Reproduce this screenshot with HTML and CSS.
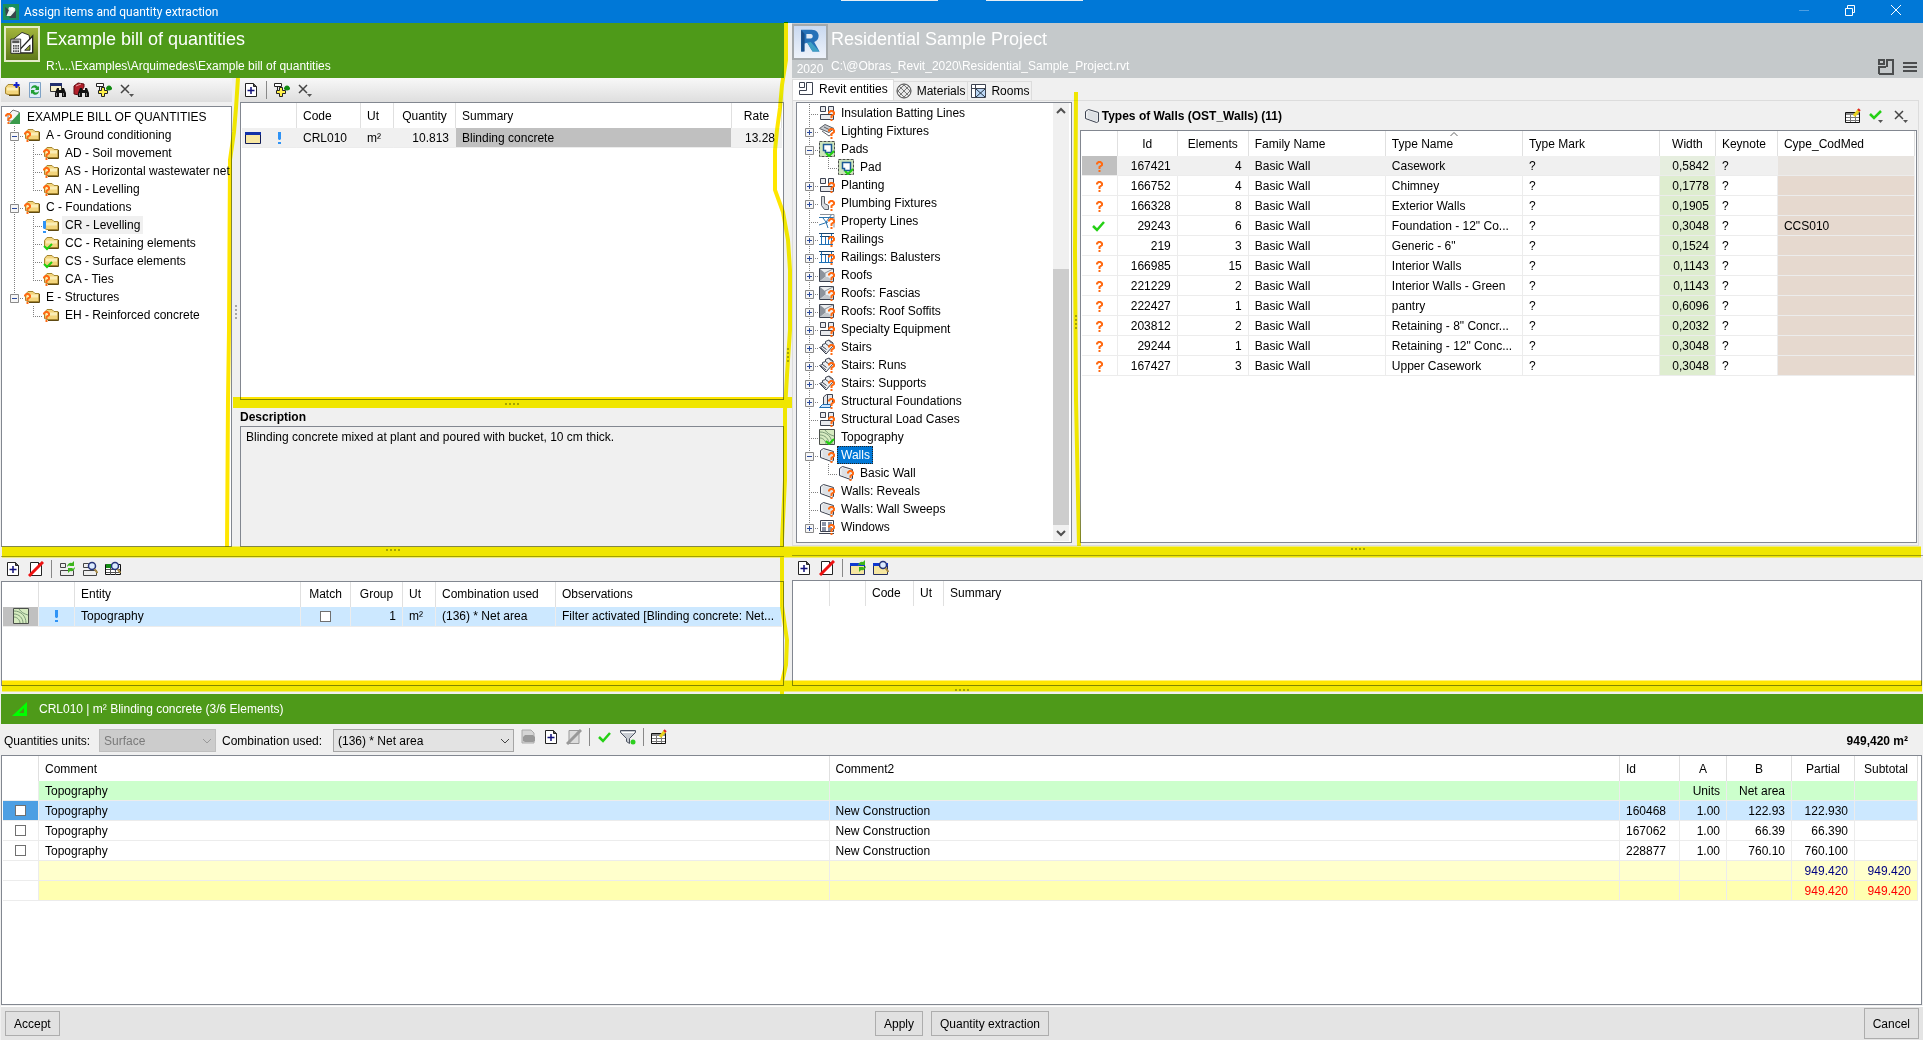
FILE: index.html
```html
<!DOCTYPE html>
<html lang="en">
<head>
	<meta charset="utf-8">
	<meta name="viewport" content="width=device-width, initial-scale=1.0">
	<title>Assign items and quantity extraction</title>
	<link rel="stylesheet" href="styles.css">
</head>
<body>
	<!-- icon sprite, every symbol is drawn on a 16px grid -->
	<svg class="sprite" width="0" height="0" aria-hidden="true">
		<defs>
			<g id="q"><path d="M1 3.500V2.500L2.500 1h2L6 2.500v1.500L3.500 6v2" fill="none" stroke="#ff6a13" stroke-width="2"/><path d="M2.500 9h2v2h-2z" fill="#ff6a13"/></g>
			<g id="tick"><path d="M1 3l3 3 5-5" fill="none" stroke="#1fcf0f" stroke-width="2"/></g>
			<g id="bang"><path d="M0 0h3v7l-1 1h-1l-1-1zM0 10h3v2H0z" fill="#2f93f5"/></g>
			<g id="folder"><path d="M1.500 11.500V5.500L4 2.500h5L11 4.500h4v8h-11z" fill="#f3d57c" stroke="#a5852f"/><path d="M3 5.500h11v3H3z" fill="#fbedb5"/><path d="M15.500 5v8.500H5" fill="none" stroke="#5f4a12"/></g>
			<g id="boxes"><path d="M1.500 1.500h5v5h-5zM9.500 1.500h5v8h-5zM1.500 9.500h13v5h-13z" fill="#e8eaee" stroke="#3c4250"/></g>
			<g id="wall"><path d="M1.500 3.500l3-2 10 3v9l-2 1-11-4z" fill="#f0f2f4" stroke="#3c4250"/><path d="M3.500 2.500l10 3v8l-10-3z" fill="#dde0e4"/></g>
			<g id="roof"><path d="M.5 1.500h14v13H.5z" fill="#eceef0" stroke="#3c4250"/><path d="M1 2l5 4v4l-5 4z" fill="#8d939c"/><path d="M1 14l5-4h3l5 4z" fill="#c3c7cc"/><path d="M14 2L6 6v4" fill="none" stroke="#8d939c"/></g>
			<g id="rail"><path d="M0 2.500h15M1 5.500h14" stroke="#17456e"/><path d="M2.500 3v11M6.500 6v8M9.500 6v8M12.500 3v11M0 13.500h14" stroke="#1d6fb5" fill="none"/></g>
			<g id="stair"><path d="M.5 8.500l3-1V5.500l3-1V2.500L10 1l4 3v3l-7 8z" fill="#eceef1" stroke="#3c4250"/><path d="M3.500 7.500l4 3M6.500 4.500l4 3M10 1.500l3 3M2 9l5 4" stroke="#3c4250" fill="none"/></g>
			<g id="topo"><path d="M.5.5h15v15H.5z" fill="#d6ebc0" stroke="#4a4f4a"/><path d="M1 6c5 0 9 4 9 9M1 3c7 0 12 5 12 12M1 9c3 0 6 3 6 6M6 1c2 3 5 5 9 6" fill="none" stroke="#7c9a78"/></g>
			<g id="pad"><path d="M.5.5h15v15H.5z" fill="#cfe6bd" stroke="#4a4f4a" stroke-dasharray="3 1"/><path d="M4.500 3.500h8v8h-6v-2h-2z" fill="#fff" stroke="#1c5a96" stroke-width="1.500"/></g>
			<g id="light"><path d="M.5 5.500L6 1.500l9 4-5 4z" fill="#c9ccd0" stroke="#5b6068"/><path d="M3 8l7 5 4-3M5 4l6 3" stroke="#5b6068" fill="none"/></g>
			<g id="plumb"><path d="M2.500 1.500h3v7l4 2v4h-4l-3-4z" fill="#d8dbdf" stroke="#5b6068"/></g>
			<g id="prop"><path d="M0 4.500h15M0 12l9-3M7 9l6-8M4 5l3 4 2 6" stroke="#2d74ad" fill="none"/><path d="M1 1.500h14v13" stroke="#8b9199" fill="none"/></g>
			<g id="found"><path d="M4.500 12V4l3-2.500h6V11" fill="#e6e8ec" stroke="#3c4250"/><path d="M8.500 2v9" stroke="#3c4250"/><path d="M.5 14.500l3-3h8v3z" fill="#cfe6ff" stroke="#1d6fb5"/></g>
			<g id="win"><path d="M1.500 1.500h13v11h-13zM0 14.500h15" fill="#fff" stroke="#3c4250"/><path d="M3 3h4v4H3zM9 3h4v4H9zM3 8h4v4H3zM9 8h4v4H9z" fill="#8b93a6"/></g>
			<g id="root"><path d="M3 6l5-5 6 2v9H3z" fill="#f4f4f4" stroke="#777"/><path d="M4 15L15 3v12z" fill="#3b9b4c"/></g>
			<g id="page"><path d="M2.500 1.500h8l3 3v10h-11z" fill="#fff" stroke="#222"/><path d="M10.500 1.500v3h3" fill="#555" stroke="#222"/></g>
			<g id="new"><use href="#page"/><path d="M8 5v7M4.500 8.500h7" stroke="#10107a" stroke-width="1.500"/></g>
			<g id="del"><use href="#page"/><path d="M1 15L15 1" stroke="#e11" stroke-width="3"/></g>
			<g id="bino"><path d="M7 6h2v2h3V6h2l2 5v4h-4v-4h-3v4H5v-4z" fill="#111"/><path d="M6 11h1v3H6zM13 11h1v3h-1z" fill="#777"/></g>
			<g id="findwin"><path d="M.5 1.500h11v8H.5z" fill="#f6f0c8" stroke="#333"/><path d="M0 1h12v3H0z" fill="#22306e"/><use href="#bino"/></g>
			<g id="findbook"><path d="M1 4l4-3 6 1v3l-5 8-5-1z" fill="#b3202a" stroke="#5f0d13"/><path d="M3 4l5-2" stroke="#e8a0a4"/><use href="#bino"/></g>
			<g id="assign"><path d="M.5 1.500h7v3h-7z" fill="#fff" stroke="#222"/><path d="M3.500 5v4" stroke="#222"/><path d="M5.500 5.500h3v3h3v3h-3v3h-3v-3h-3v-3h3z" fill="#fff04a" stroke="#222"/><path d="M10 6.500h6" stroke="#128a12" stroke-width="2"/><circle cx="13" cy="6" r="2.500" fill="#128a12"/></g>
			<g id="clear"><path d="M2 3l8 8M10 3l-8 8" stroke="#444" stroke-width="1.500"/><path d="M10 12h5l-2.500 3z" fill="#555"/></g>
			<g id="ok"><path d="M2 8l4 4 7-8" fill="none" stroke="#25d015" stroke-width="2.500"/></g>
			<g id="edit"><path d="M.5 4.500h14v10H.5z" fill="#fff" stroke="#111"/><path d="M1 5h13v2H1z" fill="#888"/><path d="M1 9.500h13M1 12.500h13M5.500 7v7M10.500 7v7" stroke="#777"/><path d="M9 8l5-6" stroke="#e8d21e" stroke-width="3"/><path d="M13 1l2 2" stroke="#d22" stroke-width="2"/></g>
			<g id="spin"><path d="M8 6a4 4 0 0 1 5-4l2-2v5h-5l1-1c-1 0-2 1-3 2zM16 6a4 4 0 0 1-5 4l-2 2V7h5l-1 1c1 0 2-1 3-2z" fill="#3db51c"/></g>
			<g id="lens"><circle cx="10" cy="5" r="3.500" fill="#dcebff" stroke="#26347a" stroke-width="1.500"/><path d="M12.500 8l3 4" stroke="#a78a45" stroke-width="2"/></g>
			<g id="greybox"><path d="M1.500 2.500h5v4h-5zM1.500 9.500h13v5h-13z" fill="#eee" stroke="#444"/></g>
			<g id="winbox"><path d="M.5 3.500h14v11H.5z" fill="#f5e6a0" stroke="#222c5e"/><path d="M0 3h15v3H0z" fill="#1039d0"/></g>
			<g id="plus"><path d="M.5.5h8v8h-8z" fill="#f6f6f6" stroke="#8a8a8a"/><path d="M2 4.500h5M4.500 2v5" stroke="#2b4a9c"/></g>
			<g id="minus"><path d="M.5.5h8v8h-8z" fill="#f6f6f6" stroke="#8a8a8a"/><path d="M2 4.500h5" stroke="#2b4a9c"/></g>
		</defs>
	</svg>

	<header class="titlebar">
		<div class="titlebar-name">
			<svg class="ico" viewBox="0 0 16 16"><path d="M0 0h16v16H0z" fill="#1b8f5c"/><path d="M3 12l3-9 6 1 1 8z" fill="#e8f1ec"/><path d="M2 3l4 3-3 7M6 14l7-8v8z" fill="#37464a"/><circle cx="9" cy="5" r="2" fill="#fff"/></svg>
			<h1>Assign items and quantity extraction</h1>
		</div>
		<div class="titlebar-tabs"><i></i><i></i></div>
		<div class="titlebar-controls">
			<button aria-label="Minimize"><svg viewBox="0 0 12 12"><path d="M1 6.500h10" stroke="#4d9fe3"/></svg></button>
			<button aria-label="Restore"><svg viewBox="0 0 12 12"><path d="M1.500 4.500h7v7h-7zM3.500 4V1.500h7v7H9" fill="none" stroke="#fff"/></svg></button>
			<button aria-label="Close"><svg viewBox="0 0 12 12"><path d="M1 1l10 10M11 1L1 11" stroke="#fff"/></svg></button>
		</div>
	</header>

	<main class="workspace">
		<section class="side">
			<div class="project bill">
				<div class="logo"><svg class="logo-bill" viewBox="0 0 36 36"><path d="M9 12l9-7 8 3 3 20H13z" fill="#fff" stroke="#222"/><path d="M12 28L30 9v19z" fill="#fff" stroke="#222" stroke-width="1.500"/><path d="M21 25l6-6v6z" fill="#8fa02c" stroke="#222"/><path d="M5.500 12.500h11v16h-11z" fill="#f4f4f4" stroke="#222"/><path d="M7 14h8v3H7z" fill="#555"/><path d="M8 20h7M8 23h7M8 26h7" stroke="#333" stroke-width="2" stroke-dasharray="1.500 1"/></svg></div>
				<div>
					<h2>Example bill of quantities</h2>
					<p>R:\...\Examples\Arquimedes\Example bill of quantities</p>
				</div>
			</div>

			<div class="upper">
				<div class="pane chapters">
					<div class="toolbar shaded">
						<button aria-label="New chapter"><svg class="ico" viewBox="0 0 16 16"><use href="#folder"/><path d="M12.500 0v6M9.500 3h6" stroke="#12c" stroke-width="2"/></svg></button>
						<button aria-label="Refresh"><svg class="ico" viewBox="0 0 16 16"><path d="M2.500.5h11v15h-11z" fill="#dcecfb" stroke="#7ea2c6"/><path d="M4 7c0-4 5-5 7-2l1-1v4H8l1-1c-1-2-3-2-5 0zM12 9c0 4-5 5-7 2l-1 1V8h4l-1 1c1 2 3 2 5 0z" fill="#1f9e35"/></svg></button>
						<button aria-label="Find item"><svg class="ico" viewBox="0 0 16 16"><use href="#findwin"/></svg></button>
						<button aria-label="Find in library"><svg class="ico" viewBox="0 0 16 16"><use href="#findbook"/></svg></button>
						<button aria-label="Assign"><svg class="ico" viewBox="0 0 16 16"><use href="#assign"/></svg></button>
						<button aria-label="Remove"><svg class="ico" viewBox="0 0 16 16"><use href="#clear"/></svg></button>
					</div>
					<ul class="box tree">
						<li><svg class="ico" viewBox="0 0 16 16"><use href="#root"/><use href="#q" y="4"/></svg><span>EXAMPLE BILL OF QUANTITIES</span></li>
						<li><button class="branch" aria-label="Collapse"><svg viewBox="0 0 9 9"><use href="#minus"/></svg></button><svg class="ico" viewBox="0 0 16 16"><use href="#folder"/><use href="#q" y="4"/></svg><span>A - Ground conditioning</span></li>
						<li><i class="line"></i><i class="branch"></i><svg class="ico" viewBox="0 0 16 16"><use href="#folder"/><use href="#q" y="4"/></svg><span>AD - Soil movement</span></li>
						<li><i class="line"></i><i class="branch"></i><svg class="ico" viewBox="0 0 16 16"><use href="#folder"/><use href="#q" y="4"/></svg><span>AS - Horizontal wastewater net</span></li>
						<li><i class="line"></i><i class="branch end"></i><svg class="ico" viewBox="0 0 16 16"><use href="#folder"/><use href="#q" y="4"/></svg><span>AN - Levelling</span></li>
						<li><button class="branch" aria-label="Collapse"><svg viewBox="0 0 9 9"><use href="#minus"/></svg></button><svg class="ico" viewBox="0 0 16 16"><use href="#folder"/><use href="#q" y="4"/></svg><span>C - Foundations</span></li>
						<li><i class="line"></i><i class="branch"></i><svg class="ico" viewBox="0 0 16 16"><use href="#folder"/><use href="#bang" y="4"/></svg><span class="current">CR - Levelling</span></li>
						<li><i class="line"></i><i class="branch"></i><svg class="ico" viewBox="0 0 16 16"><use href="#folder"/><use href="#tick" y="8"/></svg><span>CC - Retaining elements</span></li>
						<li><i class="line"></i><i class="branch"></i><svg class="ico" viewBox="0 0 16 16"><use href="#folder"/><use href="#tick" y="8"/></svg><span>CS - Surface elements</span></li>
						<li><i class="line"></i><i class="branch end"></i><svg class="ico" viewBox="0 0 16 16"><use href="#folder"/><use href="#q" y="4"/></svg><span>CA - Ties</span></li>
						<li><button class="branch end" aria-label="Collapse"><svg viewBox="0 0 9 9"><use href="#minus"/></svg></button><svg class="ico" viewBox="0 0 16 16"><use href="#folder"/><use href="#q" y="4"/></svg><span>E - Structures</span></li>
						<li><i class="line none"></i><i class="branch end"></i><svg class="ico" viewBox="0 0 16 16"><use href="#folder"/><use href="#q" y="4"/></svg><span>EH - Reinforced concrete</span></li>
					</ul>
				</div>
				<div class="splitter vertical"><i class="grip"></i></div>
				<div class="pane items">
					<div class="toolbar shaded">
						<button aria-label="New item"><svg class="ico" viewBox="0 0 16 16"><use href="#new"/></svg></button>
						<i class="sep"></i>
						<button aria-label="Assign"><svg class="ico" viewBox="0 0 16 16"><use href="#assign"/></svg></button>
						<button aria-label="Remove"><svg class="ico" viewBox="0 0 16 16"><use href="#clear"/></svg></button>
					</div>
					<div class="box grow-table">
						<table class="t-items">
							<colgroup><col class="w22"><col class="w33"><col class="w64"><col class="w33"><col class="w62"><col><col class="w50"></colgroup>
							<thead><tr><th class="plain"></th><th></th><th>Code</th><th>Ut</th><th class="mid">Quantity</th><th>Summary</th><th class="mid">Rate</th></tr></thead>
							<tbody>
								<tr class="grey"><td class="mark"><svg class="ico" viewBox="0 0 16 16"><path d="M.5 2.500h15v11H.5z" fill="#f8e7a2" stroke="#111c55"/><path d="M0 2h16v3H0z" fill="#1231a8"/></svg></td><td class="mark"><svg class="ico" viewBox="0 0 16 16"><use href="#bang" x="6" y="2"/></svg></td><td>CRL010</td><td>m²</td><td class="num">10.813</td><td class="focus">Blinding concrete</td><td class="num">13.28</td></tr>
							</tbody>
						</table>
					</div>
					<div class="splitter thin"><i class="grip"></i></div>
					<label class="caption" for="description">Description</label>
					<textarea class="box description" id="description" readonly>Blinding concrete mixed at plant and poured with bucket, 10 cm thick.</textarea>
				</div>
			</div>

			<div class="splitter ruled"><i class="grip"></i></div>

			<div class="toolbar">
				<button aria-label="New assignment"><svg class="ico" viewBox="0 0 16 16"><use href="#new"/></svg></button>
				<button aria-label="Delete assignment"><svg class="ico" viewBox="0 0 16 16"><use href="#del"/></svg></button>
				<i class="sep"></i>
				<button aria-label="Update entity"><svg class="ico" viewBox="0 0 16 16"><use href="#greybox"/><use href="#spin"/></svg></button>
				<button aria-label="Show entity"><svg class="ico" viewBox="0 0 16 16"><use href="#greybox"/><use href="#lens"/></svg></button>
				<button aria-label="Show quantities"><svg class="ico" viewBox="0 0 16 16"><path d="M.5 3.500h15v10H.5z" fill="#fff" stroke="#111"/><path d="M1 3h5v4H1z" fill="#118a11"/><path d="M1 8.500h14M1 11.500h14M5.500 7v7M10.500 7v7" stroke="#555"/><use href="#lens"/></svg></button>
			</div>
			<div class="box lower">
				<table class="t-entities">
					<colgroup><col class="w36"><col class="w36"><col><col class="w50"><col class="w52"><col class="w33"><col class="w120"><col></colgroup>
					<thead><tr><th></th><th></th><th>Entity</th><th class="mid">Match</th><th class="mid">Group</th><th>Ut</th><th>Combination used</th><th>Observations</th></tr></thead>
					<tbody>
						<tr class="picked"><td class="mark focus"><svg class="ico" viewBox="0 0 16 16"><use href="#topo"/></svg></td><td class="mark"><svg class="ico" viewBox="0 0 16 16"><use href="#bang" x="6" y="2"/></svg></td><td>Topography</td><td class="mark"><input type="checkbox" aria-label="Match"></td><td class="num">1</td><td>m²</td><td>(136) * Net area</td><td>Filter activated [Blinding concrete: Net...</td></tr>
					</tbody>
				</table>
			</div>
		</section>

		<div class="splitter vertical"><i class="grip"></i></div>

		<section class="side">
			<div class="project revit">
				<div class="logo-year">
					<div class="logo"><svg class="logo-revit" viewBox="0 0 32 32"><path d="M7 3h12c6 0 8 4 8 7 0 4-2 6-5 7l6 11h-8l-6-10-4 1v9H7z" fill="#2671b8"/><path d="M13 8h5c3 0 3 5 0 5h-5z" fill="#dfe9f6"/><path d="M14 18l4-1 10 11h-8z" fill="#3fa0c4"/><path d="M7 3l4 5v20H7z" fill="#174f8c"/></svg></div>
					<span>2020</span>
				</div>
				<div>
					<h2>Residential Sample Project</h2>
					<p>C:\@Obras_Revit_2020\Residential_Sample_Project.rvt</p>
				</div>
				<div class="project-tools">
					<button aria-label="Layout"><svg class="ico" viewBox="0 0 16 16"><path d="M1 1h5v4H1zM1 15V8h7M9 8V1h6v14H1" fill="none" stroke="#4b4d4e" stroke-width="2"/></svg></button>
					<button aria-label="Menu"><svg class="ico" viewBox="0 0 16 16"><path d="M1 4h14M1 8h14M1 12h14" stroke="#4b4d4e" stroke-width="2"/></svg></button>
				</div>
			</div>

			<nav class="tabs">
				<button class="active"><svg class="ico" viewBox="0 0 16 16"><path d="M1.500 1.500h5v5h-5zM8.500 1.500h6v12h-13v-4h7z" fill="#fff" stroke="#3c4250"/></svg>Revit entities</button>
				<button><svg class="ico" viewBox="0 0 16 16"><circle cx="8" cy="8" r="7" fill="#e8e8e8" stroke="#444"/><path d="M3 3l10 10M1 7l8 8M7 1l8 8M13 3L3 13M9 1L1 9M15 7l-8 8" stroke="#777"/></svg>Materials</button>
				<button><svg class="ico" viewBox="0 0 16 16"><path d="M1.500 1.500h14v13h-14zM5.500 1.500v13M1.500 5.500h14" fill="#fff" stroke="#3c4250"/><path d="M6 6h9v8H6z" fill="#bcd7f5"/><path d="M6 6l9 8M15 6l-9 8" stroke="#234"/></svg>Rooms</button>
			</nav>
			<div class="tab-panel">
				<div class="box entities">
					<ul class="tree">
						<li><i class="branch"></i><svg class="ico" viewBox="0 0 16 16"><use href="#boxes"/><use href="#q" x="9" y="5"/></svg><span>Insulation Batting Lines</span></li>
						<li><button class="branch" aria-label="Expand"><svg viewBox="0 0 9 9"><use href="#plus"/></svg></button><svg class="ico" viewBox="0 0 16 16"><use href="#light"/><use href="#q" x="9" y="5"/></svg><span>Lighting Fixtures</span></li>
						<li><button class="branch" aria-label="Collapse"><svg viewBox="0 0 9 9"><use href="#minus"/></svg></button><svg class="ico" viewBox="0 0 16 16"><use href="#pad"/><use href="#tick" x="6" y="9"/></svg><span>Pads</span></li>
						<li><i class="line"></i><i class="branch end"></i><svg class="ico" viewBox="0 0 16 16"><use href="#pad"/><use href="#tick" x="6" y="9"/></svg><span>Pad</span></li>
						<li><button class="branch" aria-label="Expand"><svg viewBox="0 0 9 9"><use href="#plus"/></svg></button><svg class="ico" viewBox="0 0 16 16"><use href="#boxes"/><use href="#q" x="9" y="5"/></svg><span>Planting</span></li>
						<li><button class="branch" aria-label="Expand"><svg viewBox="0 0 9 9"><use href="#plus"/></svg></button><svg class="ico" viewBox="0 0 16 16"><use href="#plumb"/><use href="#q" x="9" y="5"/></svg><span>Plumbing Fixtures</span></li>
						<li><i class="branch"></i><svg class="ico" viewBox="0 0 16 16"><use href="#prop"/><use href="#q" x="9" y="5"/></svg><span>Property Lines</span></li>
						<li><button class="branch" aria-label="Expand"><svg viewBox="0 0 9 9"><use href="#plus"/></svg></button><svg class="ico" viewBox="0 0 16 16"><use href="#rail"/><use href="#q" x="9" y="5"/></svg><span>Railings</span></li>
						<li><button class="branch" aria-label="Expand"><svg viewBox="0 0 9 9"><use href="#plus"/></svg></button><svg class="ico" viewBox="0 0 16 16"><use href="#rail"/><use href="#q" x="9" y="5"/></svg><span>Railings: Balusters</span></li>
						<li><button class="branch" aria-label="Expand"><svg viewBox="0 0 9 9"><use href="#plus"/></svg></button><svg class="ico" viewBox="0 0 16 16"><use href="#roof"/><use href="#q" x="9" y="5"/></svg><span>Roofs</span></li>
						<li><button class="branch" aria-label="Expand"><svg viewBox="0 0 9 9"><use href="#plus"/></svg></button><svg class="ico" viewBox="0 0 16 16"><use href="#roof"/><use href="#q" x="9" y="5"/></svg><span>Roofs: Fascias</span></li>
						<li><button class="branch" aria-label="Expand"><svg viewBox="0 0 9 9"><use href="#plus"/></svg></button><svg class="ico" viewBox="0 0 16 16"><use href="#roof"/><use href="#q" x="9" y="5"/></svg><span>Roofs: Roof Soffits</span></li>
						<li><button class="branch" aria-label="Expand"><svg viewBox="0 0 9 9"><use href="#plus"/></svg></button><svg class="ico" viewBox="0 0 16 16"><use href="#boxes"/><use href="#q" x="9" y="5"/></svg><span>Specialty Equipment</span></li>
						<li><button class="branch" aria-label="Expand"><svg viewBox="0 0 9 9"><use href="#plus"/></svg></button><svg class="ico" viewBox="0 0 16 16"><use href="#stair"/><use href="#q" x="9" y="5"/></svg><span>Stairs</span></li>
						<li><button class="branch" aria-label="Expand"><svg viewBox="0 0 9 9"><use href="#plus"/></svg></button><svg class="ico" viewBox="0 0 16 16"><use href="#stair"/><use href="#q" x="9" y="5"/></svg><span>Stairs: Runs</span></li>
						<li><button class="branch" aria-label="Expand"><svg viewBox="0 0 9 9"><use href="#plus"/></svg></button><svg class="ico" viewBox="0 0 16 16"><use href="#stair"/><use href="#q" x="9" y="5"/></svg><span>Stairs: Supports</span></li>
						<li><button class="branch" aria-label="Expand"><svg viewBox="0 0 9 9"><use href="#plus"/></svg></button><svg class="ico" viewBox="0 0 16 16"><use href="#found"/><use href="#q" x="9" y="5"/></svg><span>Structural Foundations</span></li>
						<li><i class="branch"></i><svg class="ico" viewBox="0 0 16 16"><use href="#boxes"/><use href="#q" x="9" y="5"/></svg><span>Structural Load Cases</span></li>
						<li><i class="branch"></i><svg class="ico" viewBox="0 0 16 16"><use href="#topo"/><use href="#tick" x="6" y="9"/></svg><span>Topography</span></li>
						<li><button class="branch" aria-label="Collapse"><svg viewBox="0 0 9 9"><use href="#minus"/></svg></button><svg class="ico" viewBox="0 0 16 16"><use href="#wall"/><use href="#q" x="9" y="5"/></svg><span class="selected">Walls</span></li>
						<li><i class="line"></i><i class="branch end"></i><svg class="ico" viewBox="0 0 16 16"><use href="#wall"/><use href="#q" x="9" y="5"/></svg><span>Basic Wall</span></li>
						<li><i class="branch"></i><svg class="ico" viewBox="0 0 16 16"><use href="#wall"/><use href="#q" x="9" y="5"/></svg><span>Walls: Reveals</span></li>
						<li><i class="branch"></i><svg class="ico" viewBox="0 0 16 16"><use href="#wall"/><use href="#q" x="9" y="5"/></svg><span>Walls: Wall Sweeps</span></li>
						<li><button class="branch end" aria-label="Expand"><svg viewBox="0 0 9 9"><use href="#plus"/></svg></button><svg class="ico" viewBox="0 0 16 16"><use href="#win"/><use href="#q" x="9" y="5"/></svg><span>Windows</span></li>
					</ul>
					<div class="scrollbar">
						<svg viewBox="0 0 16 16"><path d="M4 10l4-4 4 4" fill="none" stroke="#505050" stroke-width="2"/></svg>
						<div class="track"><i></i></div>
						<svg viewBox="0 0 16 16"><path d="M4 6l4 4 4-4" fill="none" stroke="#505050" stroke-width="2"/></svg>
					</div>
				</div>
				<div class="splitter vertical"><i class="grip"></i></div>
				<div class="pane types">
					<div class="types-head">
						<svg class="ico" viewBox="0 0 16 16"><use href="#wall"/></svg>
						<h3>Types of Walls (OST_Walls) (11)</h3>
						<button aria-label="Edit columns"><svg class="ico" viewBox="0 0 16 16"><use href="#edit"/></svg></button>
						<button aria-label="Accept"><svg class="ico" viewBox="0 0 16 16"><path d="M1 6l4 4 7-7" fill="none" stroke="#25d015" stroke-width="2.500"/><path d="M9 12h5l-2.500 3z" fill="#555"/></svg></button>
						<button aria-label="Remove"><svg class="ico" viewBox="0 0 16 16"><use href="#clear"/></svg></button>
					</div>
					<div class="box fill">
						<table class="t-walls">
							<colgroup><col class="w36"><col class="w60"><col class="w71"><col><col><col><col class="w56"><col class="w62"><col></colgroup>
							<thead><tr><th></th><th class="mid">Id</th><th class="mid">Elements</th><th>Family Name</th><th class="sorted">Type Name<svg viewBox="0 0 8 4"><path d="M.5 4L4 .5 7.500 4" fill="none" stroke="#666"/></svg></th><th>Type Mark</th><th class="mid">Width</th><th>Keynote</th><th>Cype_CodMed</th></tr></thead>
							<tbody>
								<tr class="grey"><td class="mark focus"><svg class="ico" viewBox="0 0 16 16"><use href="#q" x="5" y="3"/></svg></td><td class="num">167421</td><td class="num">4</td><td>Basic Wall</td><td>Casework</td><td>?</td><td class="num width">0,5842</td><td>?</td><td class="code"></td></tr>
								<tr><td class="mark"><svg class="ico" viewBox="0 0 16 16"><use href="#q" x="5" y="3"/></svg></td><td class="num">166752</td><td class="num">4</td><td>Basic Wall</td><td>Chimney</td><td>?</td><td class="num width">0,1778</td><td>?</td><td class="code"></td></tr>
								<tr><td class="mark"><svg class="ico" viewBox="0 0 16 16"><use href="#q" x="5" y="3"/></svg></td><td class="num">166328</td><td class="num">8</td><td>Basic Wall</td><td>Exterior Walls</td><td>?</td><td class="num width">0,1905</td><td>?</td><td class="code"></td></tr>
								<tr><td class="mark"><svg class="ico" viewBox="0 0 16 16"><use href="#ok"/></svg></td><td class="num">29243</td><td class="num">6</td><td>Basic Wall</td><td>Foundation - 12" Co...</td><td>?</td><td class="num width">0,3048</td><td>?</td><td class="code">CCS010</td></tr>
								<tr><td class="mark"><svg class="ico" viewBox="0 0 16 16"><use href="#q" x="5" y="3"/></svg></td><td class="num">219</td><td class="num">3</td><td>Basic Wall</td><td>Generic - 6"</td><td>?</td><td class="num width">0,1524</td><td>?</td><td class="code"></td></tr>
								<tr><td class="mark"><svg class="ico" viewBox="0 0 16 16"><use href="#q" x="5" y="3"/></svg></td><td class="num">166985</td><td class="num">15</td><td>Basic Wall</td><td>Interior Walls</td><td>?</td><td class="num width">0,1143</td><td>?</td><td class="code"></td></tr>
								<tr><td class="mark"><svg class="ico" viewBox="0 0 16 16"><use href="#q" x="5" y="3"/></svg></td><td class="num">221229</td><td class="num">2</td><td>Basic Wall</td><td>Interior Walls - Green</td><td>?</td><td class="num width">0,1143</td><td>?</td><td class="code"></td></tr>
								<tr><td class="mark"><svg class="ico" viewBox="0 0 16 16"><use href="#q" x="5" y="3"/></svg></td><td class="num">222427</td><td class="num">1</td><td>Basic Wall</td><td>pantry</td><td>?</td><td class="num width">0,6096</td><td>?</td><td class="code"></td></tr>
								<tr><td class="mark"><svg class="ico" viewBox="0 0 16 16"><use href="#q" x="5" y="3"/></svg></td><td class="num">203812</td><td class="num">2</td><td>Basic Wall</td><td>Retaining - 8" Concr...</td><td>?</td><td class="num width">0,2032</td><td>?</td><td class="code"></td></tr>
								<tr><td class="mark"><svg class="ico" viewBox="0 0 16 16"><use href="#q" x="5" y="3"/></svg></td><td class="num">29244</td><td class="num">1</td><td>Basic Wall</td><td>Retaining - 12" Conc...</td><td>?</td><td class="num width">0,3048</td><td>?</td><td class="code"></td></tr>
								<tr><td class="mark"><svg class="ico" viewBox="0 0 16 16"><use href="#q" x="5" y="3"/></svg></td><td class="num">167427</td><td class="num">3</td><td>Basic Wall</td><td>Upper Casework</td><td>?</td><td class="num width">0,3048</td><td>?</td><td class="code"></td></tr>
							</tbody>
						</table>
					</div>
				</div>
			</div>

			<div class="splitter ruled"><i class="grip"></i></div>

			<div class="toolbar">
				<button aria-label="New assignment"><svg class="ico" viewBox="0 0 16 16"><use href="#new"/></svg></button>
				<button aria-label="Delete assignment"><svg class="ico" viewBox="0 0 16 16"><use href="#del"/></svg></button>
				<i class="sep"></i>
				<button aria-label="Update item"><svg class="ico" viewBox="0 0 16 16"><use href="#winbox"/><use href="#spin"/></svg></button>
				<button aria-label="Show item"><svg class="ico" viewBox="0 0 16 16"><use href="#winbox"/><use href="#lens"/></svg></button>
			</div>
			<div class="box lower">
				<table class="t-assigned">
					<colgroup><col class="w36"><col class="w36"><col class="w48"><col class="w30"><col></colgroup>
					<thead><tr><th></th><th></th><th>Code</th><th>Ut</th><th class="plain">Summary</th></tr></thead>
				</table>
			</div>
		</section>
	</main>

	<section class="details">
		<div class="splitter thin"><i class="grip"></i></div>
		<div class="details-title">
			<svg class="ico" viewBox="0 0 16 16"><path d="M0 15L15 1v14zM7 12h5V7z" fill="#0f0" fill-rule="evenodd"/></svg>
			<h2>CRL010 | m² Blinding concrete (3/6 Elements)</h2>
		</div>
		<div class="options">
			<label class="units-label" for="units">Quantities units:</label>
			<div class="select off"><select id="units" disabled><option>Surface</option></select><svg viewBox="0 0 10 6"><path d="M1 1l4 4 4-4" fill="none" stroke="#999"/></svg></div>
			<label class="combination-label" for="combination">Combination used:</label>
			<div class="select wide"><select id="combination"><option>(136) * Net area</option></select><svg viewBox="0 0 10 6"><path d="M1 1l4 4 4-4" fill="none" stroke="#444"/></svg></div>
			<div class="toolbar">
				<button aria-label="Print" disabled><svg class="ico" viewBox="0 0 16 16"><path d="M2 1h9l3 3v10H2z" fill="#d5d5d5" stroke="#aaa"/><path d="M3 8l2-2h8l2 2v4l-2 1H5l-2-1z" fill="#999"/></svg></button>
				<button aria-label="New line"><svg class="ico" viewBox="0 0 16 16"><use href="#new"/></svg></button>
				<button aria-label="Delete line" disabled><svg class="ico" viewBox="0 0 16 16"><path d="M3 1.500h10v13H3z" fill="#ddd" stroke="#999"/><path d="M1 15L15 1" stroke="#999" stroke-width="3"/></svg></button>
				<i class="sep"></i>
				<button aria-label="Check"><svg class="ico" viewBox="0 0 16 16"><use href="#ok"/></svg></button>
				<button aria-label="Filter"><svg class="ico" viewBox="0 0 16 16"><path d="M.5 1.500h15v2l-6 6v5l-3-2v-3l-6-6z" fill="#c8ccd2" stroke="#4b5260"/><path d="M2 3.500h12" stroke="#fff"/><circle cx="13" cy="13" r="2.500" fill="#2ccf1f"/></svg></button>
				<i class="sep"></i>
				<button aria-label="Edit columns"><svg class="ico" viewBox="0 0 16 16"><use href="#edit"/></svg></button>
			</div>
			<strong>949,420 m²</strong>
		</div>
		<div class="box measured">
			<table class="t-details">
				<colgroup><col class="w36"><col><col><col class="w60"><col class="w47"><col class="w65"><col class="w63"><col class="w63"></colgroup>
				<thead><tr><th></th><th>Comment</th><th>Comment2</th><th>Id</th><th class="mid">A</th><th class="mid">B</th><th class="mid">Partial</th><th class="mid">Subtotal</th></tr></thead>
				<tbody>
					<tr class="heading"><td></td><td>Topography</td><td></td><td></td><td class="num">Units</td><td class="num">Net area</td><td></td><td></td></tr>
					<tr class="picked"><td class="mark tickbox"><input type="checkbox" aria-label="Element 160468"></td><td>Topography</td><td>New Construction</td><td>160468</td><td class="num">1.00</td><td class="num">122.93</td><td class="num">122.930</td><td></td></tr>
					<tr><td class="mark"><input type="checkbox" aria-label="Element 167062"></td><td>Topography</td><td>New Construction</td><td>167062</td><td class="num">1.00</td><td class="num">66.39</td><td class="num">66.390</td><td></td></tr>
					<tr><td class="mark"><input type="checkbox" aria-label="Element 228877"></td><td>Topography</td><td>New Construction</td><td>228877</td><td class="num">1.00</td><td class="num">760.10</td><td class="num">760.100</td><td></td></tr>
					<tr class="sum"><td></td><td></td><td></td><td></td><td></td><td></td><td class="num">949.420</td><td class="num">949.420</td></tr>
					<tr class="total"><td></td><td></td><td></td><td></td><td></td><td></td><td class="num">949.420</td><td class="num">949.420</td></tr>
				</tbody>
			</table>
		</div>
		<footer class="actions">
			<button>Accept</button>
			<div><button>Apply</button><button>Quantity extraction</button></div>
			<button class="cancel">Cancel</button>
		</footer>
	</section>

	<!-- highlighter strokes along the splitters -->
	<svg class="marker" viewBox="0 0 1923 1040" preserveAspectRatio="none" aria-hidden="true">
		<path d="M238 78L236 108 234 132 230 160 229 330 228 400 227 547" stroke-width="4"/>
		<path d="M786 22V60L782 85 780 108 777 130 775 150V190L783 212 788 240 790 270V330L787 375 785 410 785 480 782 540V606L787 640 786 665 782 682V694" stroke-width="4"/>
		<path d="M1076 92L1075 250 1076 400 1079 546" stroke-width="4"/>
		<path d="M233 402.500H792" stroke-width="11"/>
		<path d="M2 552H1921M2 686H1922" stroke-width="11"/>
	</svg>
</body>
</html>
```
FILE: styles.css
```css
* {
	box-sizing: border-box;
}

body {
	position: relative;
	display: flex;
	flex-direction: column;
	height: 100vh;
	margin: 0;
	padding-left: 1px;
	overflow: hidden;
	background: #f0f0f0;
	color: #000;
	font: 12px/18px "Liberation Sans", Arial, sans-serif;
}

h1, h2, h3, p, ul {
	margin: 0;
	padding: 0;
	font-size: 12px;
	font-weight: normal;
}

button, select, textarea {
	margin: 0;
	padding: 0;
	border: 0;
	background: none;
	color: inherit;
	font: inherit;
}

svg {
	display: block;
	flex: none;
}

.sprite {
	position: absolute;
}

.ico {
	width: 16px;
	height: 16px;
}

/* window title */
.titlebar {
	display: grid;
	grid-template-columns: 1fr auto 1fr;
	flex: none;
	height: 23px;
	background: #0078d7;
	color: #fff;
}

.titlebar-name {
	display: flex;
	align-items: center;
	gap: 5px;
	padding-left: 2px;
}

.titlebar h1 {
	font-family: "Segoe UI", Roboto, sans-serif;
}

.titlebar-tabs {
	display: flex;
	gap: 48px;
}

.titlebar-tabs i {
	width: 97px;
	height: 1px;
	background: #e6eef5;
}

.titlebar-controls {
	display: flex;
	justify-content: flex-end;
	padding-right: 4px;
}

.titlebar-controls button {
	display: grid;
	place-items: center;
	width: 46px;
	height: 20px;
}

.titlebar-controls svg {
	width: 12px;
	height: 12px;
}

/* two halves */
.workspace {
	display: grid;
	grid-template-columns: 783fr 8px 1131fr;
	grid-template-rows: minmax(0, 1fr);
	flex: 663 1 0;
	min-height: 0;
}

.side, .pane {
	display: flex;
	flex-direction: column;
	min-width: 0;
	min-height: 0;
}

.project {
	display: flex;
	flex: none;
	height: 55px;
	color: #fff;
}

.project h2 {
	padding-top: 4px;
	font-size: 18px;
	line-height: 24px;
}

.project p {
	padding-top: 6px;
}

.bill {
	gap: 6px;
	padding-left: 3px;
	background: #4e9a19;
}

.bill .logo {
	width: 36px;
	height: 36px;
	margin-top: 3px;
	border: 2px solid #e4ebc8;
	background: linear-gradient(#a3b53c, #5f7a1a);
}

.logo-bill {
	width: 32px;
	height: 32px;
}

.revit {
	gap: 3px;
	background: #c5c9cb;
}

.revit .logo {
	width: 36px;
	height: 36px;
	border: 2px solid #a4a9ac;
	background: linear-gradient(#c9d9f0, #eef3fb);
}

.logo-revit {
	width: 30px;
	height: 30px;
	padding: 1px;
}

.logo-year {
	padding-top: 1px;
	text-align: center;
}

.project-tools {
	display: flex;
	align-items: flex-end;
	gap: 8px;
	margin-left: auto;
	padding: 0 5px 3px 0;
}

.upper {
	display: flex;
	flex: 473 1 0;
	min-height: 0;
}

.lower {
	flex: 103 1 0;
}

.chapters {
	flex: 231 1 0;
}

.items {
	flex: 544 1 0;
}

.box {
	min-height: 0;
	padding: 0 1px 1px;
	overflow: hidden;
	border: 1px solid #828790;
	background: #fff;
}

.fill {
	flex: 1;
}

.grow-table {
	flex: 294 1 0;
}

/* toolbars */
.toolbar {
	display: flex;
	align-items: center;
	flex: none;
	gap: 7px;
	height: 24px;
	padding-left: 4px;
}

.shaded {
	padding-left: 3px;
	background: linear-gradient(#f8f8f8, #dedede);
}

.sep {
	width: 1px;
	height: 18px;
	background: #888;
}

/* splitters */
.splitter {
	display: flex;
	align-items: center;
	justify-content: center;
	flex: none;
}

.splitter.vertical {
	width: 8px;
}

.splitter.thin {
	height: 8px;
}

.splitter.ruled {
	height: 10px;
	padding-bottom: 2px;
	border-bottom: 1px solid #a0a0a0;
}

.grip {
	width: 14px;
	height: 2px;
	background: repeating-linear-gradient(90deg, #a6a6a6 0 2px, transparent 2px 4px);
}

.vertical .grip {
	width: 2px;
	height: 14px;
	background: repeating-linear-gradient(#a6a6a6 0 2px, transparent 2px 4px);
}

/* trees */
.tree {
	list-style: none;
	padding: 1px 0 0 3px;
}

.chapters .tree {
	flex: 1;
	margin-top: 4px;
}

.tree li {
	display: flex;
	align-items: center;
	height: 18px;
	white-space: nowrap;
}

.tree span {
	margin-left: 3px;
	padding: 0 3px;
	line-height: 18px;
}

.tree .current {
	background: #f0f0f0;
}

.tree .selected {
	margin-left: 2px;
	padding: 0 3px 0 4px;
	outline: 1px dotted #222;
	outline-offset: -1px;
	background: #0078d7;
	color: #fff;
}

.branch, .line {
	display: flex;
	align-items: center;
	flex: none;
	width: 19px;
	height: 18px;
	padding-left: 5px;
	background:
		repeating-linear-gradient(#808080 0 1px, transparent 1px 2px) 9px 0 / 1px 18px no-repeat,
		repeating-linear-gradient(90deg, #808080 0 1px, transparent 1px 2px) 9px 10px / 10px 1px no-repeat;
}

.branch.end {
	background-size: 1px 10px, 10px 1px;
}

.line {
	background-size: 1px 18px, 0 0;
}

.line.none {
	background: none;
}

.branch svg {
	width: 9px;
	height: 9px;
	margin-top: 2px;
}

/* tables */
table {
	width: 100%;
	table-layout: fixed;
	border-spacing: 0;
}

th, td {
	height: 20px;
	padding: 0 6px;
	overflow: hidden;
	border-right: 1px solid #ececec;
	border-bottom: 1px solid #ececec;
	font-weight: normal;
	line-height: 18px;
	text-align: left;
	white-space: nowrap;
}

th {
	height: 25px;
	border-right-color: #e0e0e0;
	border-bottom: 0;
}

th.plain {
	border-right-color: transparent;
}

.mid {
	padding: 0;
	text-align: center;
}

.num {
	text-align: right;
}

.mark {
	padding: 0;
	text-align: center;
}

.mark svg {
	margin: 0 auto;
}

.grey td {
	border-right-color: #f0f0f0;
	background: #f0f0f0;
}

.picked td {
	background: #cce8ff;
}

tr .focus,
tr.picked .focus {
	background: #c0c0c0;
}

td.width {
	background: #deedcf;
}

td.code {
	background: #e6d9cf;
}

.grey .width {
	background: #e6eedf;
}

.grey .code {
	background: #e8e4e0;
}

.sorted {
	position: relative;
}

.sorted svg {
	position: absolute;
	top: 1px;
	left: calc(50% - 4px);
	width: 8px;
	height: 4px;
}

.w22 { width: 22px; }
.w30 { width: 30px; }
.w33 { width: 33px; }
.w36 { width: 36px; }
.w47 { width: 47px; }
.w48 { width: 48px; }
.w50 { width: 50px; }
.w52 { width: 52px; }
.w56 { width: 56px; }
.w60 { width: 60px; }
.w62 { width: 62px; }
.w63 { width: 63px; }
.w64 { width: 64px; }
.w65 { width: 65px; }
.w71 { width: 71px; }
.w120 { width: 120px; }

input[type="checkbox"] {
	display: block;
	width: 11px;
	height: 11px;
	margin: 0 auto;
	appearance: none;
	border: 1px solid #707070;
	background: #fff;
}

.caption {
	flex: none;
	height: 18px;
	font-weight: bold;
}

.description {
	flex: 116 1 0;
	padding: 1px 5px;
	resize: none;
	background: #f0f0f0;
}

/* entity tabs */
.tabs {
	display: flex;
	align-items: flex-end;
	flex: none;
	height: 22px;
}

.tabs button {
	display: flex;
	align-items: center;
	gap: 5px;
	height: 19px;
	padding: 0 2px;
	border: 1px solid #dcdcdc;
	border-bottom: 0;
}

.tabs button + button {
	border-left: 0;
}

.tabs .active {
	height: 21px;
	padding: 0 5px 2px;
	background: #fff;
}

.tab-panel {
	display: flex;
	flex: 440 1 0;
	min-height: 0;
	margin-right: 4px;
	padding: 1px 1px 2px 3px;
	border: 1px solid #dcdcdc;
}

.entities {
	display: flex;
	flex: 271 1 0;
	min-width: 0;
	padding-right: 2px;
}

.entities .tree {
	flex: 1;
	padding: 1px 0 0 2px;
}

.scrollbar {
	display: flex;
	flex-direction: column;
	flex: none;
	width: 16px;
	background: #f0f0f0;
}

.scrollbar svg {
	width: 16px;
	height: 16px;
}

.track {
	display: flex;
	flex-direction: column;
	justify-content: flex-end;
	flex: 1;
}

.track i {
	height: 63%;
	background: #cdcdcd;
}

.types {
	flex: 838 1 0;
}

.types-head {
	display: flex;
	align-items: center;
	flex: none;
	gap: 8px;
	height: 28px;
	padding: 0 8px 0 4px;
}

.types-head h3 {
	flex: 1;
	margin-left: -6px;
	font-weight: bold;
}

/* measurement detail */
.details {
	display: flex;
	flex-direction: column;
	flex: 354 1 0;
	min-height: 0;
}

.details-title {
	display: flex;
	align-items: center;
	flex: none;
	gap: 11px;
	height: 30px;
	padding-left: 11px;
	background: #4e9a19;
	color: #fff;
}

.options {
	display: flex;
	align-items: center;
	flex: none;
	gap: 6px;
	height: 31px;
	padding: 2px 15px 0 3px;
}

.units-label {
	min-width: 89px;
}

.combination-label {
	min-width: 105px;
}

.select {
	display: grid;
	align-items: center;
	width: 117px;
}

.select.wide {
	width: 181px;
}

.select select {
	grid-area: 1 / 1;
	height: 23px;
	padding-left: 4px;
	border: 1px solid #a5a5a5;
	appearance: none;
	background: #e3e3e3;
}

.select svg {
	grid-area: 1 / 1;
	justify-self: end;
	width: 10px;
	height: 6px;
	margin-right: 4px;
	pointer-events: none;
}

.select.off select {
	border-color: #bfbfbf;
	background: #ccc;
	color: #7a7a7a;
	opacity: 1;
}

.options .toolbar {
	align-self: flex-start;
	height: 22px;
	padding-left: 0;
}

.options strong {
	margin-left: auto;
}

.measured {
	flex: 1;
	padding-right: 3px;
}

.measured,
.side:last-child .lower {
	margin-right: 1px;
}

.heading td:not(:first-child) {
	background: #cfc;
}

.picked .tickbox {
	background: #4d9fe3;
}

.sum td:not(:first-child) {
	background: #ffc;
	color: #000080;
}

.total td:not(:first-child) {
	background: #ffffb0;
	color: #f00;
}

.actions {
	display: grid;
	grid-template-columns: 1fr auto 1fr;
	align-items: center;
	flex: none;
	height: 34px;
	margin-top: 1px;
	padding: 0 4px;
	border-top: 1px solid #fff;
	background: #e4e4e4;
}

.actions div {
	display: flex;
	gap: 8px;
}

.actions button {
	justify-self: start;
	height: 25px;
	padding: 0 8px;
	border: 1px solid #adadad;
	background: #e1e1e1;
}

.actions .cancel {
	justify-self: end;
	height: 31px;
}

.marker {
	position: absolute;
	inset: 0;
	width: 100%;
	height: 100%;
	fill: none;
	stroke: #ffe600;
	mix-blend-mode: darken;
	pointer-events: none;
}
```
